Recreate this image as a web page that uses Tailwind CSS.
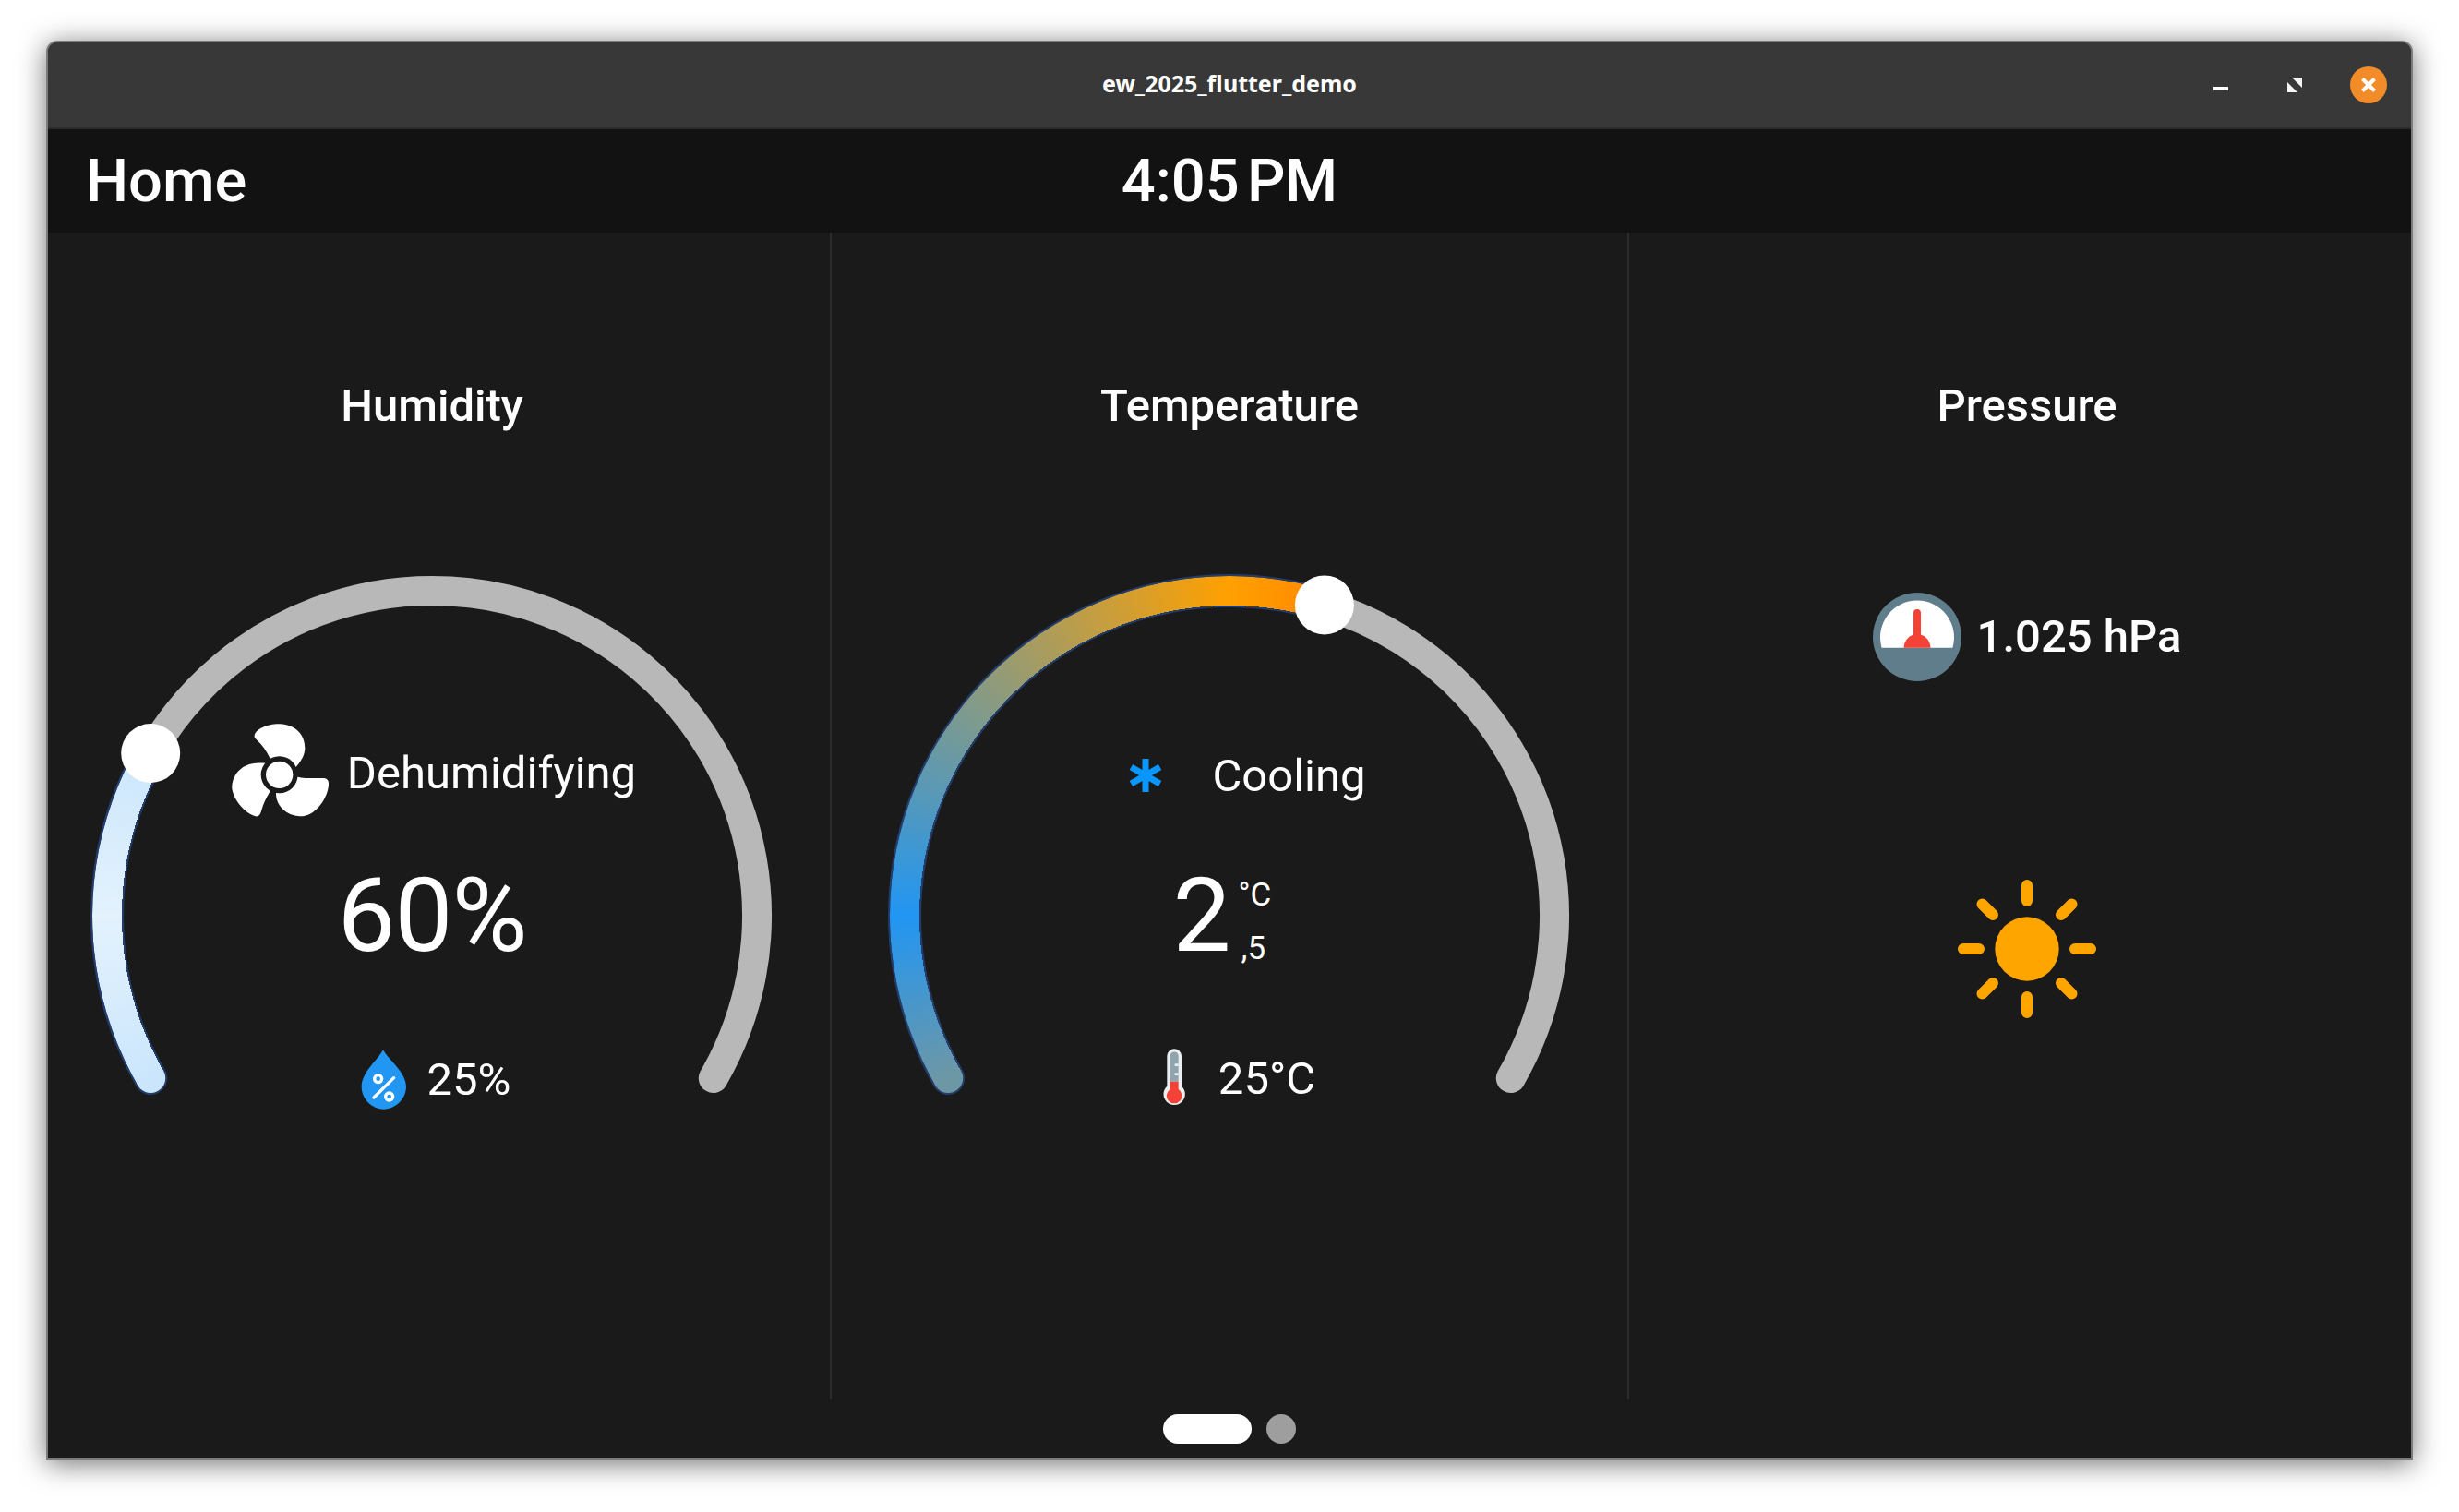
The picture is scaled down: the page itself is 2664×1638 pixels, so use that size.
<!DOCTYPE html>
<html>
<head>
<meta charset="utf-8">
<script src="https://cdn.jsdelivr.net/npm/@tailwindcss/browser@4"></script>
<title>ew_2025_flutter_demo</title>
</head>
<body class="bg-white w-[2664px] h-[1638px] overflow-hidden font-['Roboto',sans-serif] text-white">
<div class="pt-[44px] pl-[50px] pr-[50px]">
<div class="w-[2564px] h-[1538px] flex flex-col rounded-t-[12px] overflow-hidden border-2 border-[#7c7c7c] bg-[#1a1a1a] shadow-[0_4px_30px_rgba(0,0,0,0.55)]">

  <div class="relative h-[94px] shrink-0 flex items-center justify-center bg-[#383838] border-b-2 border-[#2c2c2c]">
    <span class="font-['Noto_Sans',sans-serif] font-bold text-[25px] leading-none -mt-[3px]">ew_2025_flutter_demo</span>
    <div class="absolute right-[26px] top-[26px] flex items-center">
      <svg class="w-[16px] h-[4px] mt-[8px] mr-[64px]" viewBox="0 0 16 4"><rect width="16" height="4" fill="#fff"/></svg>
      <svg class="w-[16px] h-[16px] mr-[52px]" viewBox="0 0 16 16"><path d="M5 0H16V11ZM0 5L11 16H0Z" fill="#f4f4f4"/></svg>
      <div class="w-[40px] h-[40px] rounded-full bg-[#f28c28] flex items-center justify-center">
        <svg class="w-[20px] h-[20px]" viewBox="0 0 20 20"><path d="M3.5 3.5L16.5 16.5M16.5 3.5L3.5 16.5" stroke="#fff" stroke-width="4"/></svg>
      </div>
    </div>
  </div>

  <div class="relative h-[112px] shrink-0 bg-[#121212] flex items-center justify-center">
    <span class="absolute left-[41px] text-[65px] font-medium leading-none">Home</span>
    <span class="text-[65px] font-medium leading-none [word-spacing:-8px]">4:05 PM</span>
  </div>

  <div class="-ml-[15px] -mr-[17px] h-[1264px] grid grid-cols-3 shrink-0">
    <section class="border-r-2 border-[#2c2c2c] flex flex-col items-center pt-[160px]">
      <h2 class="text-[49px] font-medium leading-[56px]">Humidity</h2>
      <div class="relative w-[768px] h-[768px] mt-[140px]">
        <svg class="absolute inset-0" viewBox="0 0 768 768" fill="none" stroke-linecap="round">
          <path d="M79.2 560A352 352 0 1 1 688.8 560" stroke="#b8b8b8" stroke-width="32"/>
          <path d="M79.2 560A352 352 0 0 1 79.2 208" stroke="#233c6a" stroke-width="36"/>
          <circle cx="79.2" cy="560" r="16" fill="#cbe6fc"/>
        </svg>
        <div class="absolute inset-[16px] rounded-full bg-[conic-gradient(from_240deg,#cbe6fc_0deg,#e3f2fd_30deg,#cbe6fc_60deg,transparent_60deg,transparent_360deg)] [mask-image:radial-gradient(closest-side,transparent_calc(100%-32px),black_calc(100%-32px))]"></div>
        <svg class="absolute inset-0" viewBox="0 0 768 768"><circle cx="79.2" cy="208" r="32" fill="#fff"/></svg>

        <div class="absolute inset-0">
          <div class="absolute left-[5px] right-0 top-[178px] flex items-center justify-center gap-[18px]">
            <svg class="w-[150px] h-[150px] -my-[25px] -mx-[22px]" viewBox="0 0 450 450">
              <path fill="#fff" d="M137 108C140 85 185 68 220 70C270 72 302 105 301 150C300 175 285 195 270 212L218 218L188 182C175 155 160 135 145 122C138 115 136 112 137 108Z"/>
              <path fill="#fff" d="M270 240C290 248 330 246 362 246C375 246 380 258 378 270C372 320 330 372 285 370C240 368 205 335 207 292L218 235Z"/>
              <path fill="#fff" d="M172 197C150 195 120 197 100 210C78 225 62 250 64 280C68 315 105 360 140 370C152 372 157 362 160 350C165 330 175 310 187 290L218 235Z"/>
              <circle cx="218" cy="235" r="60" fill="#1a1a1a"/>
              <circle cx="218" cy="235" r="44" fill="#fff"/>
            </svg>
            <span class="text-[49px] leading-[56px] mt-[4px]">Dehumidifying</span>
          </div>
          <div class="absolute left-0 right-0 top-[320px] text-center text-[112px] font-normal tracking-[-1px] leading-[128px]">60%</div>
          <div class="absolute left-[8px] right-0 top-[532px] flex items-center justify-center gap-[12px]">
            <svg class="w-[100px] h-[100px] -my-[20px] -mx-[20px]" viewBox="0 0 300 300">
              <path fill="#2196f3" d="M132 52C150 85 207 125 207 172C207 212 172 245 134 245C96 245 62 212 62 172C62 125 115 85 132 52Z"/>
              <g fill="none" stroke="#fff" stroke-width="10">
                <circle cx="116" cy="146" r="12"/><circle cx="152" cy="204" r="12"/>
                <path d="M167 143L102 207" stroke-linecap="round"/>
              </g>
            </svg>
            <span class="text-[49px] leading-[56px]">25%</span>
          </div>
        </div>
      </div>
    </section>

    <section class="border-r-2 border-[#2c2c2c] flex flex-col items-center pt-[160px]">
      <h2 class="text-[49px] font-medium leading-[56px]">Temperature</h2>
      <div class="relative w-[768px] h-[768px] mt-[140px]">
        <svg class="absolute inset-0" viewBox="0 0 768 768" fill="none" stroke-linecap="round">
          <path d="M79.2 560A352 352 0 1 1 688.8 560" stroke="#b8b8b8" stroke-width="32"/>
          <path d="M79.2 560A352 352 0 0 1 486.9 47.4" stroke="#233c6a" stroke-width="36"/>
          <circle cx="79.2" cy="560" r="16" fill="#6e97a5"/>
        </svg>
        <div class="absolute inset-[16px] rounded-full bg-[conic-gradient(from_240deg,#6e97a5_0deg,#2196f3_30deg,#ffa000_120deg,#ff8800_137deg,transparent_137deg,transparent_360deg)] [mask-image:radial-gradient(closest-side,transparent_calc(100%-32px),black_calc(100%-32px))]"></div>
        <svg class="absolute inset-0" viewBox="0 0 768 768"><circle cx="486.9" cy="47.4" r="32" fill="#fff"/></svg>

        <div class="absolute inset-0">
          <div class="absolute left-[39px] right-0 top-[205px] flex items-center justify-center">
            <svg class="w-[36px] h-[36px] mr-[54px] -mt-[3px]" viewBox="0 0 36 36"><path d="M18 0V36M2.4 9L33.6 27M33.6 9L2.4 27" stroke="#0a96ff" stroke-width="7" fill="none"/></svg>
            <span class="text-[49px] leading-[56px]">Cooling</span>
          </div>
          <div class="absolute left-0 right-[16px] top-[320px] flex justify-center">
            <span class="text-[112px] leading-[128px] font-normal">2</span>
            <div class="ml-[8px] flex flex-col pt-[23px] gap-[20px]">
              <span class="text-[35px] leading-[38px]">°C</span>
              <span class="text-[35px] leading-[38px] ml-[3px]">,5</span>
            </div>
          </div>
          <div class="absolute left-[22px] right-0 top-[532px] flex items-center justify-center gap-[39px]">
            <svg class="w-[60px] h-[100px] -my-[20px] -mx-[20px]" viewBox="0 0 180 300">
              <path fill="#eceff1" d="M70 72a23.5 23.5 0 0 1 47 0V170a35 35 0 1 1 -47 0Z"/>
              <path fill="#90a4ae" d="M80 72a13.5 13.5 0 0 1 27 0V155H80Z"/>
              <path fill="#f44336" d="M80 155H107V180a25 25 0 1 1 -27 0Z"/>
              <rect x="95" y="97" width="12" height="8" fill="#eceff1"/><rect x="95" y="127" width="12" height="8" fill="#eceff1"/>
            </svg>
            <span class="text-[49px] leading-[56px] -mt-[3px]">25°C</span>
          </div>
        </div>
      </div>
    </section>

    <section class="border-r-2 border-transparent flex flex-col items-center pt-[160px]">
      <h2 class="text-[49px] font-medium leading-[56px]">Pressure</h2>
      <div class="mt-[174px] flex items-center gap-[17px]">
        <svg class="w-[96px] h-[96px]" viewBox="0 0 96 96">
          <circle cx="48" cy="48" r="48" fill="#607d8b"/>
          <path fill="#fff" d="M9.6 59.7A40 40 0 1 1 86.4 59.7Z"/>
          <path fill="#f44336" d="M33.5 59.7A14.5 14.5 0 0 1 44 45.6V22a4 4 0 0 1 8 0V45.6A14.5 14.5 0 0 1 62.5 59.7Z"/>
        </svg>
        <span class="text-[49px] font-medium leading-[56px]">1.025 hPa</span>
      </div>
      <svg class="w-[150px] h-[150px] mt-[215px]" viewBox="-75 -75 150 150" fill="none" stroke="#ffa500" stroke-width="12" stroke-linecap="round">
        <circle r="34.7" fill="#ffa500" stroke="none"/>
        <path d="M0 -69V-52M0 69V52M-69 0H-52M69 0H52M-48.5 -48.5L-37 -37M48.5 -48.5L37 -37M-48.5 48.5L-37 37M48.5 48.5L37 37"/>
      </svg>
    </section>
  </div>

  <div class="flex-1 flex justify-center items-start gap-[16px] pt-[16px]">
    <div class="w-[96px] h-[32px] rounded-full bg-white"></div>
    <div class="w-[32px] h-[32px] rounded-full bg-[#9e9e9e]"></div>
  </div>
</div>
</div>
</body>
</html>
